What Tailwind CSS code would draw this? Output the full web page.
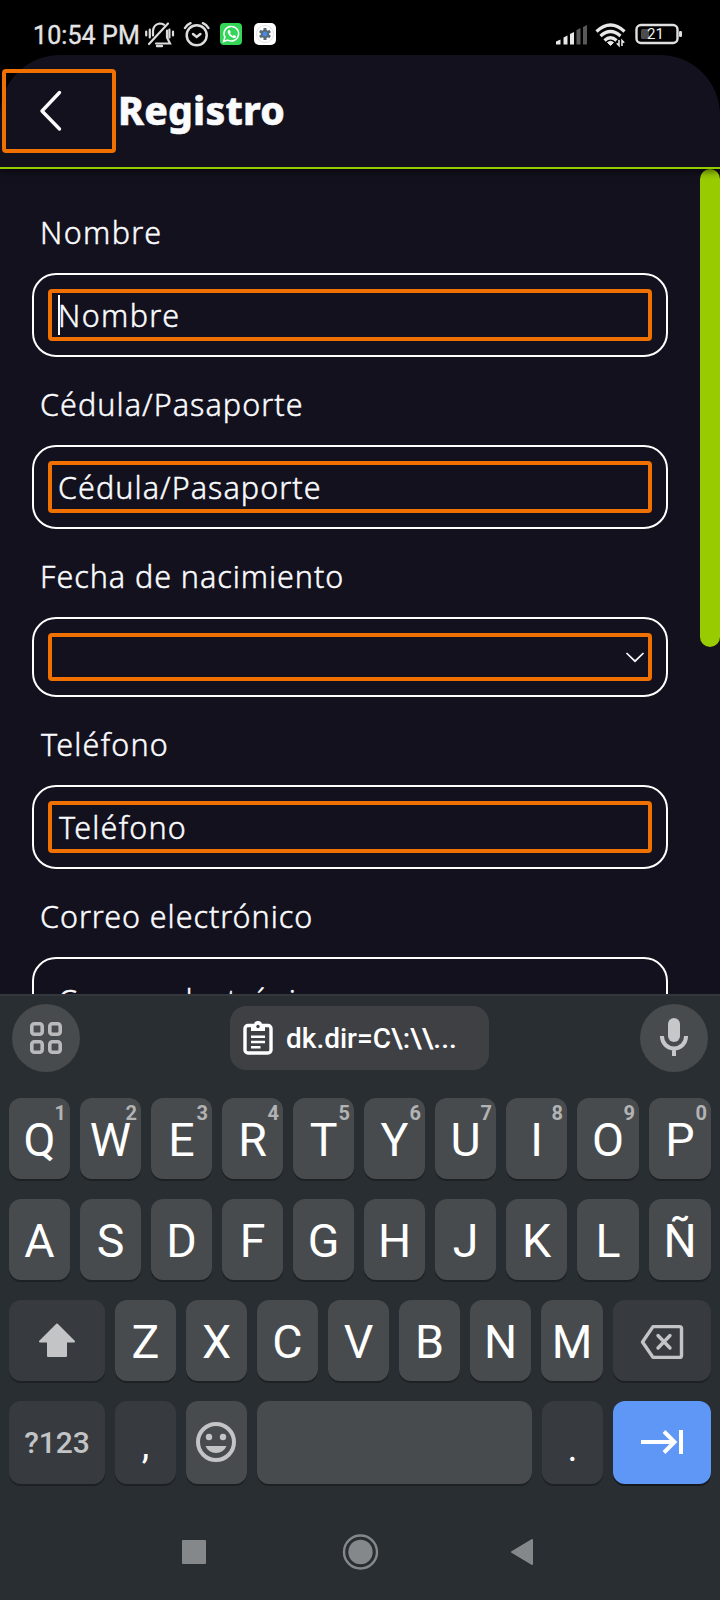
<!DOCTYPE html>
<html lang="es">
<head>
<meta charset="utf-8">
<title>Registro</title>
<script src="https://cdn.jsdelivr.net/npm/@tailwindcss/browser@4"></script>
</head>
<body class="w-[720px] h-[1600px] overflow-hidden bg-black font-['Roboto',sans-serif]">
<div class="flex flex-col w-[720px] h-[1600px]">

  <!-- Status bar -->
  <div class="h-[55px] shrink-0 flex items-start text-[#e4e4e4]">
    <span class="w-[111px] ml-[33px] mt-[21px] text-[25px] leading-[30px] tracking-[0.1px] whitespace-nowrap [-webkit-text-stroke:0.4px_#e4e4e4]">10:54 PM</span>
    <svg class="mt-[20px]" width="136" height="30" viewBox="144 20 136 30" fill="none">
      <g stroke="#dcdcdc" stroke-width="2.200" stroke-linecap="round">
        <path d="M146.200 31.500v4M149.800 29.500v8M169.400 29.500v8M173 31.500v4M149 44L168 23.500"/>
        <path d="M153 35.500V31q.5-6.500 6.500-7.500q2.500 0 4.500 1.200M167 30.500v7l3 6H156"/>
        <path d="M157 46h5" stroke-width="2.400"/>
        <circle cx="196.700" cy="35.300" r="10" stroke-width="2.500"/>
        <path d="M193 34l3.700 3 3.700-3" stroke-width="2.500"/>
        <path d="M185 28q2-3.500 5.500-4.800M208.400 28q-2-3.500-5.500-4.800" stroke-width="2.500"/>
      </g>
      <rect x="220" y="23" width="22" height="22" rx="4" fill="#34d658"/>
      <path d="M223.600 41.500l1.300-4.300a7.300 7.300 0 1 1 2.900 2.900z" stroke="#fff" stroke-width="1.500"/>
      <path d="M228.300 30.200l1.400-.3 1 2.300-.7 1q.9 1.800 2.900 2.700l1-1 2.200 1-.2 1.300q-1.300 1.300-3.200.6-3.500-1.200-4.900-4.700-.4-1.900.5-2.900z" fill="#fff"/>
      <rect x="254" y="23" width="22" height="22" rx="5" fill="#fff"/>
      <circle cx="265" cy="34" r="8.500" stroke="#dfe2e6" stroke-width="1"/>
      <path d="M265 28v12M259.800 31l10.400 6M270.200 31l-10.400 6" stroke="#5a6b78" stroke-width="3"/>
      <circle cx="265" cy="34" r="3.300" fill="#438af0" stroke="#5a6b78" stroke-width="2"/>
    </svg>
    <svg class="mt-[20px] ml-auto mr-[36px]" width="132" height="30" viewBox="552 20 132 30" fill="none">
      <path d="M556 44.500v-3l4.500-2v5zM563.500 44.500v-7l4-2v9zM570 44.500V34l4-2v12.500z" fill="#e8e8e8"/>
      <path d="M576.500 44.500V30l4-2v16.500zM583 44.500V27l4-2v19.500z" fill="#585858"/>
      <path d="M596.500 31.500Q610.500 18.500 624.500 31.500M600.500 36Q610.500 27 620.500 36M604.500 40.500q6-5.500 12 0" stroke="#e8e8e8" stroke-width="3.200"/>
      <path d="M607.500 42.500q3-2.500 6 0L610.500 45.500z" fill="#e8e8e8" stroke="#e8e8e8" stroke-width="1"/>
      <path d="M619 40v5.500l-2.200-2.200M622 46v-5.500l2.200 2.200" stroke="#e8e8e8" stroke-width="1.600"/>
      <rect x="636.500" y="25" width="41" height="18" rx="4.500" stroke="#e0e0e0" stroke-width="2.400"/>
      <rect x="641" y="29" width="8" height="10" rx="1.500" fill="#4c4c4c"/>
      <rect x="679" y="31" width="3" height="6" rx="1.200" fill="#e0e0e0"/>
      <text x="655.500" y="39" text-anchor="middle" font-family="Roboto" font-size="15" fill="#f0f0f0">21</text>
    </svg>
  </div>

  <!-- App -->
  <div class="h-[939px] shrink-0 flex flex-col rounded-t-[60px] bg-[#12111d] text-[#fafbfd] font-['Noto_Sans',sans-serif]">
    <header class="z-10 h-[114px] shrink-0 flex items-start pl-[2px] pt-[14px] border-b-2 border-[#94cc00] shadow-[0_2px_8px_rgba(0,0,0,0.6)]">
      <button class="w-[114px] h-[84px] rounded-[4px] border-4 border-[#f07000] flex items-center pl-[33px]">
        <svg width="24" height="42" viewBox="0 0 24 42" fill="none" stroke="#fafbfd" stroke-width="3.400" stroke-linecap="round" stroke-linejoin="round"><path d="M20.500 2.500L3 21l17.500 18"/></svg>
      </button>
      <h1 class="ml-[2px] mt-[11px] text-[39px] leading-[60px] font-extrabold tracking-[0.2px] [-webkit-text-stroke:0.5px_#fafbfd]">Registro</h1>
    </header>

    <main class="flex-1 min-h-0 flex justify-between overflow-hidden">
      <form class="ml-[32px] w-[636px] flex flex-col text-[30.5px] leading-[44px] font-light tracking-[1.05px] [-webkit-text-stroke:0.45px_#fafbfd]">
        <label class="h-[104px] shrink-0 pt-[41px] pl-[8px] tracking-[1.4px]">Nombre</label>
        <div class="h-[84px] shrink-0 rounded-[24px] border-2 border-white p-[14px]">
          <div class="h-[52px] rounded-[4px] border-4 border-[#f07000] flex items-center">
            <span class="ml-[6px] w-[2px] h-[40px] bg-white"></span><span class="-ml-[2px] tracking-[1.4px]">Nombre</span>
          </div>
        </div>
        <label class="h-[88px] shrink-0 pt-[25px] pl-[8px]">Cédula/Pasaporte</label>
        <div class="h-[84px] shrink-0 rounded-[24px] border-2 border-white p-[14px]">
          <div class="h-[52px] rounded-[4px] border-4 border-[#f07000] flex items-center pl-[6px]">Cédula/Pasaporte</div>
        </div>
        <label class="h-[88px] shrink-0 pt-[25px] pl-[8px] tracking-[0.95px]">Fecha de nacimiento</label>
        <div class="h-[80px] shrink-0 rounded-[24px] border-2 border-white p-[14px]">
          <div class="h-[48px] rounded-[4px] border-4 border-[#f07000] flex items-center justify-end pr-[3px]">
            <svg width="20" height="12" viewBox="0 0 20 12" fill="none" stroke="#fafbfd" stroke-width="1.700"><path d="M1.500 2L10 10.200 18.500 2"/></svg>
          </div>
        </div>
        <label class="h-[88px] shrink-0 pt-[25px] pl-[9px] tracking-[1.2px]">Teléfono</label>
        <div class="h-[84px] shrink-0 rounded-[24px] border-2 border-white p-[14px]">
          <div class="h-[52px] rounded-[4px] border-4 border-[#f07000] flex items-center pl-[7px] tracking-[1.2px]">Teléfono</div>
        </div>
        <label class="h-[88px] shrink-0 pt-[25px] pl-[8px] tracking-[0.95px]">Correo electrónico</label>
        <div class="h-[84px] shrink-0 rounded-[24px] border-2 border-white p-[14px]">
          <div class="h-[52px] pt-[5px] pl-[10px] tracking-[0.95px]">Correo electrónico</div>
        </div>
      </form>
      <div class="w-[20px] h-[478px] rounded-full bg-[#9c0]"></div>
    </main>
  </div>

  <!-- Keyboard -->
  <div class="h-[606px] shrink-0 bg-[#292e32] border-t-2 border-[#33373c] flex flex-col text-white">
    <div class="h-[102px] shrink-0 pt-[8px] px-[12px] flex items-start">
      <div class="w-[68px] h-[68px] rounded-full bg-[#484b4d] flex items-center justify-center">
        <svg width="32" height="32" viewBox="0 0 32 32" fill="none" stroke="#b9babb" stroke-width="3.600"><rect x="1.800" y="1.800" width="10.400" height="10.400" rx="2.500"/><rect x="19.800" y="1.800" width="10.400" height="10.400" rx="2.500"/><rect x="1.800" y="19.800" width="10.400" height="10.400" rx="2.500"/><rect x="19.800" y="19.800" width="10.400" height="10.400" rx="2.500"/></svg>
      </div>
      <div class="mt-[2px] ml-[150px] w-[259px] h-[64px] rounded-[16px] bg-[#3e4044] flex items-center pl-[13px]">
        <svg width="30" height="34" viewBox="0 0 30 34" fill="none"><rect x="2" y="4.500" width="26" height="27.500" rx="3" stroke="#fff" stroke-width="3.400"/><path d="M8 4h3a4 4 0 0 1 8 0h3v6H8z" fill="#fff"/><circle cx="15" cy="5.500" r="1.700" fill="#3e4044"/><path d="M8 15.700h14M8 21h14M8 26.300h9.500" stroke="#fff" stroke-width="2.600"/></svg>
        <span class="ml-[13px] mt-[1px] text-[28px] leading-[40px] font-medium whitespace-nowrap">dk.dir=C\:\\...</span>
      </div>
      <div class="ml-auto w-[68px] h-[68px] rounded-full bg-[#484b4d] flex items-center justify-center">
        <svg class="-mt-[2px]" width="28" height="40" viewBox="0 0 28 40" fill="none"><rect x="8" y="1" width="12" height="24" rx="6" fill="#c6c7c8"/><path d="M2 19v.500a12 12 0 0 0 24 0V19M14 31v8" stroke="#c6c7c8" stroke-width="4"/></svg>
      </div>
    </div>

    <div class="px-[9px] flex flex-col gap-[20px] text-[46.500px] leading-[84px] text-center">
      <div class="h-[81px] flex gap-[10px]">
        <div class="relative w-[61px] rounded-[12px] bg-[#484b4e] shadow-[0_2px_0_#1e2124]">Q<span class="absolute right-[4px] top-[3px] text-[20px] leading-[24px] font-bold text-[#b2b3b4]">1</span></div>
        <div class="relative w-[61px] rounded-[12px] bg-[#484b4e] shadow-[0_2px_0_#1e2124]">W<span class="absolute right-[4px] top-[3px] text-[20px] leading-[24px] font-bold text-[#b2b3b4]">2</span></div>
        <div class="relative w-[61px] rounded-[12px] bg-[#484b4e] shadow-[0_2px_0_#1e2124]">E<span class="absolute right-[4px] top-[3px] text-[20px] leading-[24px] font-bold text-[#b2b3b4]">3</span></div>
        <div class="relative w-[61px] rounded-[12px] bg-[#484b4e] shadow-[0_2px_0_#1e2124]">R<span class="absolute right-[4px] top-[3px] text-[20px] leading-[24px] font-bold text-[#b2b3b4]">4</span></div>
        <div class="relative w-[61px] rounded-[12px] bg-[#484b4e] shadow-[0_2px_0_#1e2124]">T<span class="absolute right-[4px] top-[3px] text-[20px] leading-[24px] font-bold text-[#b2b3b4]">5</span></div>
        <div class="relative w-[61px] rounded-[12px] bg-[#484b4e] shadow-[0_2px_0_#1e2124]">Y<span class="absolute right-[4px] top-[3px] text-[20px] leading-[24px] font-bold text-[#b2b3b4]">6</span></div>
        <div class="relative w-[61px] rounded-[12px] bg-[#484b4e] shadow-[0_2px_0_#1e2124]">U<span class="absolute right-[4px] top-[3px] text-[20px] leading-[24px] font-bold text-[#b2b3b4]">7</span></div>
        <div class="relative w-[61px] rounded-[12px] bg-[#484b4e] shadow-[0_2px_0_#1e2124]">I<span class="absolute right-[4px] top-[3px] text-[20px] leading-[24px] font-bold text-[#b2b3b4]">8</span></div>
        <div class="relative w-[62px] rounded-[12px] bg-[#484b4e] shadow-[0_2px_0_#1e2124]">O<span class="absolute right-[4px] top-[3px] text-[20px] leading-[24px] font-bold text-[#b2b3b4]">9</span></div>
        <div class="relative w-[62px] rounded-[12px] bg-[#484b4e] shadow-[0_2px_0_#1e2124]">P<span class="absolute right-[4px] top-[3px] text-[20px] leading-[24px] font-bold text-[#b2b3b4]">0</span></div>
      </div>
      <div class="h-[81px] flex gap-[10px]">
        <div class="w-[61px] rounded-[12px] bg-[#484b4e] shadow-[0_2px_0_#1e2124]">A</div>
        <div class="w-[61px] rounded-[12px] bg-[#484b4e] shadow-[0_2px_0_#1e2124]">S</div>
        <div class="w-[61px] rounded-[12px] bg-[#484b4e] shadow-[0_2px_0_#1e2124]">D</div>
        <div class="w-[61px] rounded-[12px] bg-[#484b4e] shadow-[0_2px_0_#1e2124]">F</div>
        <div class="w-[61px] rounded-[12px] bg-[#484b4e] shadow-[0_2px_0_#1e2124]">G</div>
        <div class="w-[61px] rounded-[12px] bg-[#484b4e] shadow-[0_2px_0_#1e2124]">H</div>
        <div class="w-[61px] rounded-[12px] bg-[#484b4e] shadow-[0_2px_0_#1e2124]">J</div>
        <div class="w-[61px] rounded-[12px] bg-[#484b4e] shadow-[0_2px_0_#1e2124]">K</div>
        <div class="w-[62px] rounded-[12px] bg-[#484b4e] shadow-[0_2px_0_#1e2124]">L</div>
        <div class="w-[62px] rounded-[12px] bg-[#484b4e] shadow-[0_2px_0_#1e2124]">Ñ</div>
      </div>
      <div class="h-[81px] flex gap-[10px]">
        <div class="w-[96px] rounded-[12px] bg-[#373b3f] shadow-[0_2px_0_#1e2124] flex items-center justify-center">
          <svg class="-mt-[1px]" width="38" height="36" viewBox="0 0 38 36" fill="#c3c4c6" stroke="#c3c4c6" stroke-width="2" stroke-linejoin="round"><path d="M19 2.500L36 19.500h-8V34H10V19.500H2z"/></svg>
        </div>
        <div class="w-[61px] rounded-[12px] bg-[#484b4e] shadow-[0_2px_0_#1e2124]">Z</div>
        <div class="w-[61px] rounded-[12px] bg-[#484b4e] shadow-[0_2px_0_#1e2124]">X</div>
        <div class="w-[61px] rounded-[12px] bg-[#484b4e] shadow-[0_2px_0_#1e2124]">C</div>
        <div class="w-[61px] rounded-[12px] bg-[#484b4e] shadow-[0_2px_0_#1e2124]">V</div>
        <div class="w-[61px] rounded-[12px] bg-[#484b4e] shadow-[0_2px_0_#1e2124]">B</div>
        <div class="w-[61px] rounded-[12px] bg-[#484b4e] shadow-[0_2px_0_#1e2124]">N</div>
        <div class="w-[62px] rounded-[12px] bg-[#484b4e] shadow-[0_2px_0_#1e2124]">M</div>
        <div class="w-[98px] rounded-[12px] bg-[#373b3f] shadow-[0_2px_0_#1e2124] flex items-center justify-center">
          <svg class="mt-[2px]" width="44" height="36" viewBox="0 0 44 36" fill="none" stroke="#c3c4c6" stroke-width="3.400" stroke-linejoin="round"><path d="M13 2.600h26.500q2 0 2 2v26.800q0 2-2 2H13L2.500 18z"/><path d="M18 11.500l12 12.500M30 11.500l-12 12.500" stroke-linecap="round"/></svg>
        </div>
      </div>
      <div class="h-[83px] flex gap-[10px]">
        <div class="w-[96px] rounded-[12px] bg-[#373b3f] shadow-[0_2px_0_#1e2124] text-[30px] leading-[83px] font-medium text-[#c3c4c6]">?123</div>
        <div class="w-[61px] rounded-[12px] bg-[#373b3f] shadow-[0_2px_0_#1e2124] text-[38px] leading-[88px]">,</div>
        <div class="w-[61px] rounded-[12px] bg-[#484b4e] shadow-[0_2px_0_#1e2124] flex items-center justify-center pr-[1px] pb-[2px]">
          <svg width="40" height="40" viewBox="0 0 40 40" fill="#c3c4c6"><circle cx="20" cy="20" r="18" fill="none" stroke="#c3c4c6" stroke-width="4"/><circle cx="13" cy="15" r="3.200"/><circle cx="27" cy="15" r="3.200"/><path d="M9.500 24h21q-3 7-10.500 7T9.500 24z"/></svg>
        </div>
        <div class="w-[275px] rounded-[12px] bg-[#484b4e] shadow-[0_2px_0_#1e2124]"></div>
        <div class="w-[61px] rounded-[12px] bg-[#373b3f] shadow-[0_2px_0_#1e2124] text-[38px] leading-[94px]">.</div>
        <div class="w-[98px] rounded-[12px] bg-[#5e97f6] shadow-[0_2px_0_#15181c] flex items-center justify-center pb-[2px]">
          <svg width="44" height="26" viewBox="0 0 44 26" fill="none" stroke="#fff" stroke-width="4"><path d="M1 13h33M24 2.500L34.500 13 24 23.500M41 1v24"/></svg>
        </div>
      </div>
    </div>

    <!-- Navigation -->
    <nav class="h-[116px] pl-[182px] pt-[20px] flex items-center">
      <div class="w-[24px] h-[24px] rounded-[1px] bg-[#85888a]"></div>
      <svg class="ml-[136px]" width="37" height="36" viewBox="0 0 37 36" fill="none"><circle cx="18.500" cy="18" r="16.500" stroke="#85888a" stroke-width="2.400"/><circle cx="18.500" cy="18" r="12.200" fill="#85888a"/></svg>
      <svg class="ml-[131px]" width="24" height="28" viewBox="0 0 24 28" fill="#85888a" stroke="#85888a" stroke-width="2" stroke-linejoin="round"><path d="M22 2v24L2 14z"/></svg>
    </nav>
  </div>
</div>
</body>
</html>
